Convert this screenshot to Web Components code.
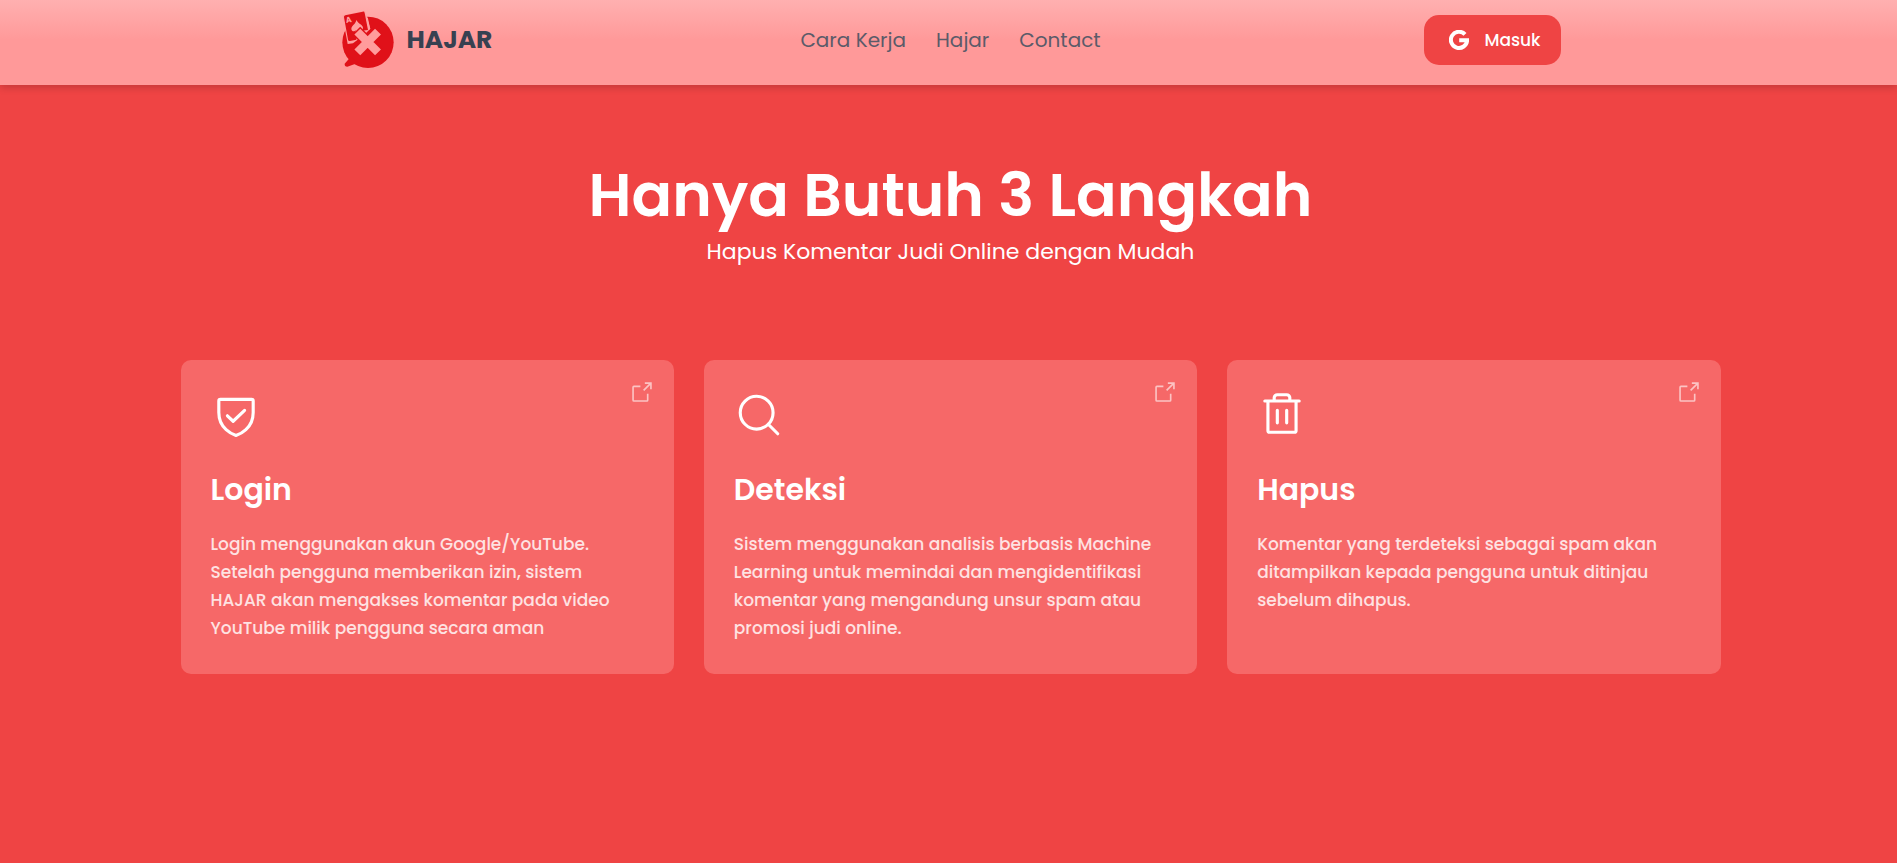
<!DOCTYPE html>
<html lang="id">
<head>
	<meta charset="utf-8">
	<meta name="viewport" content="width=device-width, initial-scale=1">
	<title>HAJAR</title>
	<style>
		body {
			margin: 0;
			min-height: 100vh;
			background: #ef4444;
			color: #fff;
			font-family: Poppins, Inter, sans-serif;
			--gutter: 4px;
		}
	</style>
</head>
<body>

<template id="site-header-template">
	<style>
		:host {
			display: block;
			position: relative;
			padding: 0 0 5px var(--gutter);
			background: linear-gradient(#ffb0b0, #ff9999 40px);
			box-shadow: 0 2px 8px rgba(0, 0, 0, .2);
		}

		.bar {
			display: grid;
			grid-template-columns: 1fr auto 1fr;
			align-items: center;
			max-width: 1220px;
			min-height: 80px;
			margin: 0 auto;
		}

		nav {
			display: flex;
			gap: 30px;
		}

		.action {
			justify-self: end;
		}
	</style>

	<header class="bar">
		<slot name="brand"></slot>
		<nav><slot></slot></nav>
		<div class="action"><slot name="action"></slot></div>
	</header>
</template>

<template id="brand-logo-template">
	<style>
		:host {
			display: block;
		}

		a {
			display: flex;
			align-items: center;
			gap: 12px;
			width: fit-content;
			color: #374151;
			font-size: 25px;
			font-weight: 700;
			text-decoration: none;
		}
	</style>

	<a href="#">
		<svg width="54" height="64" viewBox="10 0 162 192" aria-hidden="true">
			<circle cx="91" cy="103" r="77" fill="#e01119"/>
			<path d="M24 134L34 152 21 167Q20 176 29 176L62 164Z" fill="#e01119"/>
			<path d="M14 22L82 8 98 62 80 80 46 106 30 108Z" fill="#ffa0a0"/>
			<path d="M23 22L75 11Q80 10 81 15L91 66 60 70 56 95 37 99Q32 100 31 95L19 28Q18 23 23 22Z" fill="#e01119"/>
			<path d="M88 30L95 62" stroke="#ffa0a0" stroke-width="5" stroke-linecap="round"/>
			<path d="M56 36C62 48 76 50 76 60C75 68 66 68 62 63L65 74 53 76 54 66C51 72 42 71 41 63C41 52 54 50 56 36Z" fill="#ffa0a0"/>
			<path d="M56 68L122 134M122 70L58 134" stroke="#e01119" stroke-width="33"/>
			<path d="M59 71L121 133M121 71L59 133" stroke="#ff9c9c" stroke-width="25"/>
			<text x="26" y="45" fill="#ffa0a0" font-size="24" font-weight="700" transform="rotate(-11 26 45)">A</text>
		</svg>
		<slot></slot>
	</a>
</template>

<template id="nav-link-template">
	<style>
		:host {
			display: block;
		}

		a {
			color: #5b5b69;
			font-size: 20px;
			text-decoration: none;
		}
	</style>

	<a><slot></slot></a>
</template>

<template id="login-button-template">
	<style>
		:host {
			display: block;
		}

		button {
			display: flex;
			align-items: center;
			gap: 15px;
			height: 50px;
			padding: 0 20px 0 25px;
			border: 0;
			border-radius: 15px;
			background: #ef4444;
			color: #fff;
			font: inherit;
			font-size: 17px;
			font-weight: 500;
			cursor: pointer;
		}
	</style>

	<button type="button">
		<svg width="20" height="20" viewBox="0 0 20 20" fill="none" stroke="#fff" stroke-width="4" aria-hidden="true">
			<path d="M16 4.400A8.100 8.100 0 1 0 18.100 10.200H10.200"/>
		</svg>
		<slot></slot>
	</button>
</template>

<template id="steps-section-template">
	<style>
		:host {
			display: block;
			padding: 72px 20px 60px calc(20px + var(--gutter));
		}

		.title {
			text-align: center;
		}

		.cards {
			display: grid;
			grid-template-columns: repeat(3, 1fr);
			gap: 30px;
			max-width: 1540px;
			margin: 89px auto 0;
		}
	</style>

	<section>
		<div class="title"><slot name="title"></slot></div>
		<div class="cards"><slot></slot></div>
	</section>
</template>

<template id="section-title-template">
	<style>
		:host {
			display: block;
		}

		h1 {
			margin: 0;
			font-size: 60px;
			font-weight: 600;
			line-height: 76px;
		}

		p {
			margin: 0;
			font-size: 22px;
			line-height: 38px;
		}
	</style>

	<h1><slot></slot></h1>
	<p><slot name="subtitle"></slot></p>
</template>

<template id="step-card-template">
	<style>
		:host {
			display: block;
			position: relative;
			padding: 30px 30px 32px;
			border-radius: 10px;
			background: #f66868;
		}

		svg {
			display: block;
			fill: none;
			stroke: currentColor;
			stroke-linecap: round;
			stroke-linejoin: round;
		}

		.icon svg {
			width: 50px;
			height: 50px;
			stroke-width: 16;
		}

		.open {
			position: absolute;
			top: 19px;
			right: 19px;
			color: #fcc3c3;
		}

		.open svg {
			width: 26px;
			height: 26px;
			stroke-width: 16;
			stroke-linecap: butt;
			stroke-linejoin: miter;
		}

		h3 {
			margin: 30px 0 20px;
			font-size: 30px;
			font-weight: 600;
			line-height: 40px;
		}

		p {
			margin: 0;
			padding-right: 10px;
			color: #fee2e2;
			font-size: 17px;
			font-weight: 500;
			line-height: 28px;
		}
	</style>

	<div class="icon"></div>
	<a class="open" href="#" aria-label="Buka">
		<svg viewBox="0 0 256 256">
			<path d="M156 40H216V100M144 112L216 40M184 144V208A8 8 0 0 1 176 216H48A8 8 0 0 1 40 208V80A8 8 0 0 1 48 72H112"/>
		</svg>
	</a>
	<h3><slot name="heading"></slot></h3>
	<p><slot></slot></p>
</template>

<site-header>
	<brand-logo slot="brand">HAJAR</brand-logo>
	<nav-link href="#cara-kerja">Cara Kerja</nav-link>
	<nav-link href="#hajar">Hajar</nav-link>
	<nav-link href="#contact">Contact</nav-link>
	<login-button slot="action">Masuk</login-button>
</site-header>

<steps-section id="cara-kerja">
	<section-title slot="title">Hanya Butuh 3 Langkah<span slot="subtitle">Hapus Komentar Judi Online dengan Mudah</span></section-title>

	<step-card icon="shield">
		<span slot="heading">Login</span>
		Login menggunakan akun Google/YouTube. Setelah pengguna memberikan izin, sistem HAJAR akan mengakses komentar pada video YouTube milik pengguna secara aman
	</step-card>
	<step-card icon="search">
		<span slot="heading">Deteksi</span>
		Sistem menggunakan analisis berbasis Machine Learning untuk memindai dan mengidentifikasi komentar yang mengandung unsur spam atau promosi judi online.
	</step-card>
	<step-card icon="trash">
		<span slot="heading">Hapus</span>
		Komentar yang terdeteksi sebagai spam akan ditampilkan kepada pengguna untuk ditinjau sebelum dihapus.
	</step-card>
</steps-section>

<script>
	const ICONS = {
		shield: '<path d="M40 114.800V56A8 8 0 0 1 48 48H208A8 8 0 0 1 216 56V114.800C216 199 144.700 226.900 130.500 231.600A7.500 7.500 0 0 1 125.500 231.600C111.300 226.900 40 199 40 114.800Z"/><path d="M172 104L113.300 160 84 132"/>',
		search: '<circle cx="116" cy="116" r="84"/><path d="M175.400 175.400L224 224"/>',
		trash: '<path d="M216 56H40M104 104V168M152 104V168M200 56V208A8 8 0 0 1 192 216H64A8 8 0 0 1 56 208V56M168 56V40A16 16 0 0 0 152 24H104A16 16 0 0 0 88 40V56"/>'
	};

	// Attaches an open shadow root filled from the template "<tag name>-template"
	class TemplateElement extends HTMLElement {

		connectedCallback() {
			if (this.shadowRoot) {
				return;
			}

			const template = document.querySelector('#' + this.localName + '-template');
			this.attachShadow({mode: 'open'}).appendChild(template.content.cloneNode(true));
			this.render();
		}

		render() {}
	}

	class SiteHeader extends TemplateElement {}
	class BrandLogo extends TemplateElement {}
	class LoginButton extends TemplateElement {}
	class StepsSection extends TemplateElement {}
	class SectionTitle extends TemplateElement {}

	class NavLink extends TemplateElement {
		render() {
			this.shadowRoot.querySelector('a').href = this.getAttribute('href');
		}
	}

	class StepCard extends TemplateElement {
		render() {
			const icon = ICONS[this.getAttribute('icon')];
			this.shadowRoot.querySelector('.icon').innerHTML = '<svg viewBox="0 0 256 256" aria-hidden="true">' + icon + '</svg>';
		}
	}

	customElements.define('site-header', SiteHeader);
	customElements.define('brand-logo', BrandLogo);
	customElements.define('nav-link', NavLink);
	customElements.define('login-button', LoginButton);
	customElements.define('steps-section', StepsSection);
	customElements.define('section-title', SectionTitle);
	customElements.define('step-card', StepCard);
</script>

</body>
</html>
